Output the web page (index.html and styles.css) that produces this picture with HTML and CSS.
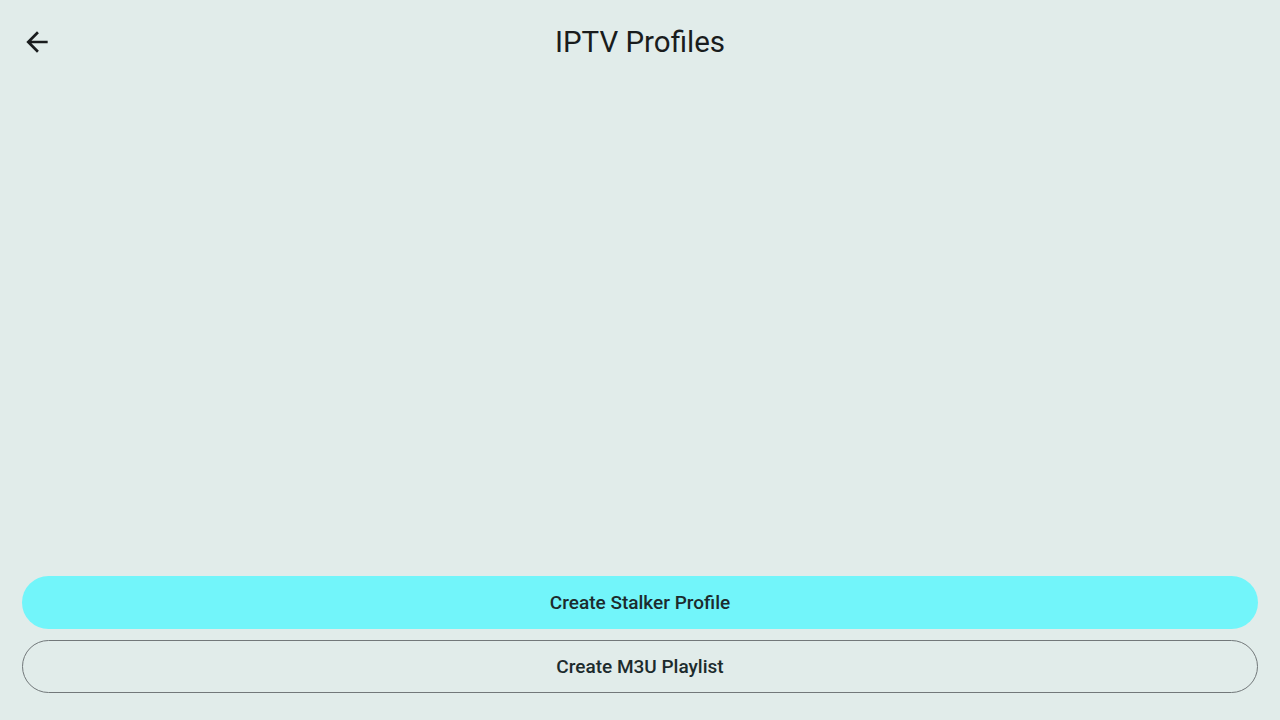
FILE: index.html
```html
<!DOCTYPE html>
<html>
<head>
<meta charset="utf-8">
<link rel="stylesheet" href="styles.css">
</head>
<body>
<div class="app">
  <header class="topbar">
    <button class="back" aria-label="Back">
      <svg width="32" height="32" viewBox="0 0 24 24"><path d="M20 11H7.83l5.59-5.59L12 4l-8 8 8 8 1.41-1.41L7.83 13H20v-2z" fill="#191c1d"/></svg>
    </button>
    <h1 class="title">IPTV Profiles</h1>
  </header>
  <main class="content"></main>
  <div class="actions">
    <button class="btn btn-filled">Create Stalker Profile</button>
    <button class="btn btn-outlined">Create M3U Playlist</button>
  </div>
</div>
</body>
</html>
```
FILE: styles.css
```css
* { box-sizing: border-box; }
html, body { margin: 0; padding: 0; }
body {
  background: #e1ecea;
  font-family: Roboto, "Noto Sans", sans-serif;
  color: #191c1d;
}
.app {
  width: 1280px;
  height: 720px;
  display: flex;
  flex-direction: column;
}
.topbar {
  height: 84px;
  display: grid;
  grid-template-columns: 75px 1fr 75px;
  align-items: center;
}
.back {
  border: none;
  background: transparent;
  padding: 0;
  margin-left: 21px;
  width: 32px;
  height: 32px;
  display: flex;
  align-items: center;
  justify-content: center;
}
.back svg { display: block; }
.title {
  margin: 0;
  text-align: center;
  font-weight: 400;
  font-size: 29.5px;
  color: #191c1d;
}
.content { flex: 1; }
.actions {
  display: flex;
  flex-direction: column;
  gap: 11px;
  padding: 0 22px 27px;
}
.btn {
  height: 53px;
  border-radius: 27px;
  font-family: Roboto, "Noto Sans", sans-serif;
  font-weight: 500;
  font-size: 19px;
  color: #1c2b2d;
  display: flex;
  align-items: center;
  justify-content: center;
  padding: 0;
}
.btn-filled {
  background: #72f5fa;
  border: none;
}
.btn-outlined {
  background: transparent;
  border: 1px solid #72787a;
}
```
